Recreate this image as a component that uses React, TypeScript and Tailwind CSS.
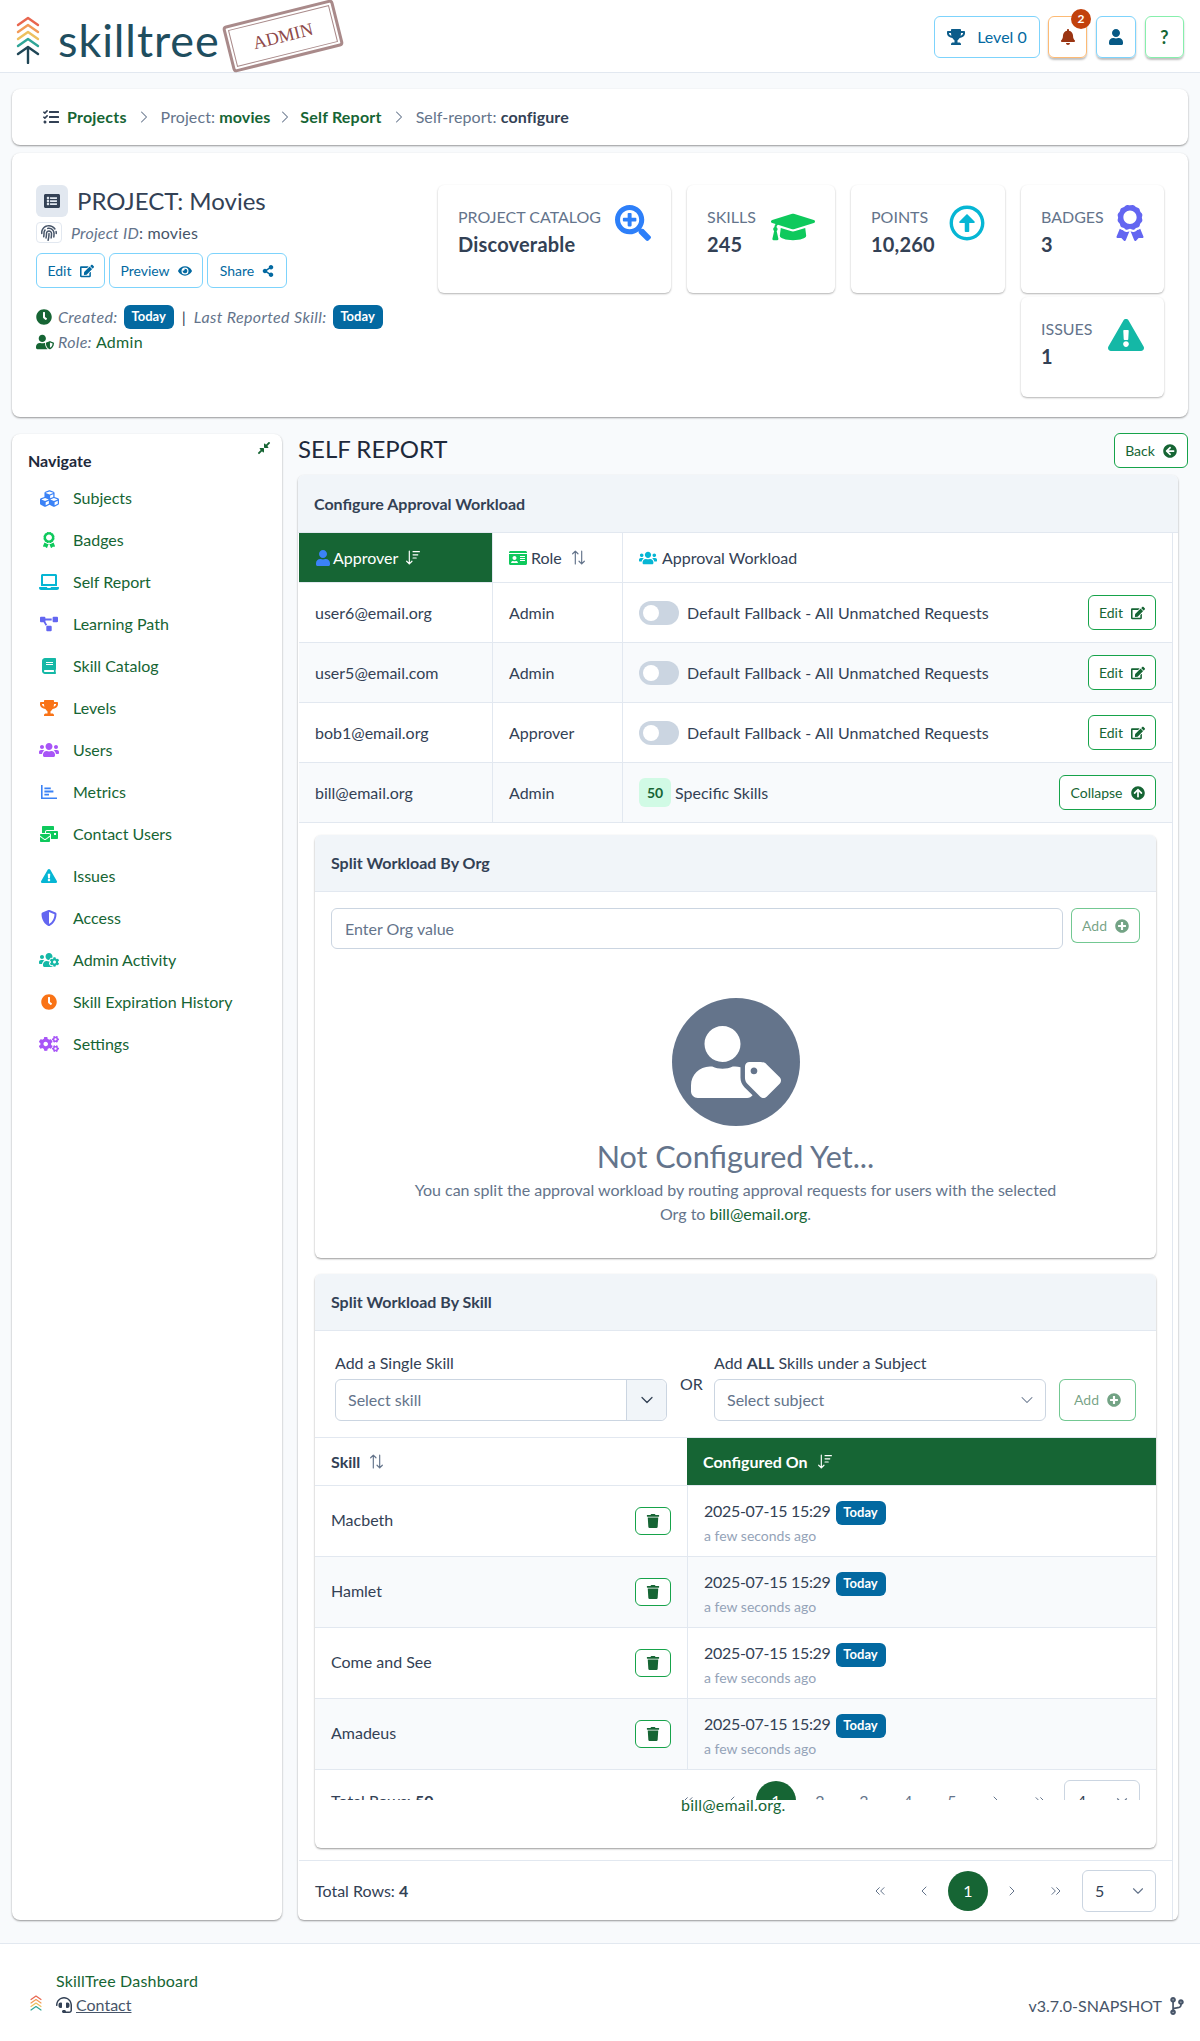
import React from 'react';
import { ChevronDown, ChevronLeft, ChevronRight, ChevronsLeft, ChevronsRight } from 'lucide-react';
import {
  FaTrophy, FaBell, FaUser, FaTasks, FaEdit, FaEye, FaShareAlt, FaClock, FaUserShield,
  FaFingerprint, FaListAlt, FaSearchPlus, FaGraduationCap, FaRegArrowAltCircleUp, FaAward,
  FaExclamationTriangle, FaCubes, FaLaptop, FaProjectDiagram, FaBook, FaUsers, FaMailBulk,
  FaShieldAlt, FaUsersCog, FaCogs, FaCompressAlt, FaIdCard, FaArrowCircleLeft, FaArrowCircleUp,
  FaPlusCircle, FaTrash, FaUserTag, FaCodeBranch, FaHeadset,
} from 'react-icons/fa';

const Chevrons = ({ className, stem = true }: { className: string; stem?: boolean }) => (
  <svg viewBox={stem ? '0 0 24 48' : '0 0 24 32'} className={className} fill="none" strokeWidth="2.4" strokeLinecap="round" strokeLinejoin="round">
    <path d="M2 9 12 2l10 7" stroke="#e8664f" />
    <path d="M2 16 12 9l10 7" stroke="#f29a57" />
    <path d="M2 23 12 16l10 7" stroke="#edc05f" />
    <path d="M2 30 12 23l10 7" stroke="#2ea597" />
    {stem && <path d="M2 38 12 31l10 7M12 31v16" stroke="#1f4656" />}
  </svg>
);

const SortAlt = ({ className = 'text-[#64748b]' }: { className?: string }) => (
  <svg viewBox="0 0 16 16" className={`h-[17px] w-[17px] ${className}`} fill="none" stroke="currentColor" strokeWidth="1.1" strokeLinecap="round" strokeLinejoin="round">
    <path d="M5 14V2M2.5 4.5 5 2l2.5 2.5M11 2v12M8.5 11.5 11 14l2.5-2.5" />
  </svg>
);

const SortDown = () => (
  <svg viewBox="0 0 16 16" className="h-[17px] w-[17px] text-white" fill="none" stroke="currentColor" strokeWidth="1.1" strokeLinecap="round" strokeLinejoin="round">
    <path d="M5 2v12M2.5 11.5 5 14l2.5-2.5M8.5 2.5h6M8.5 5.5h4.5M8.5 8.5h3" />
  </svg>
);

const MetricsIcon = () => (
  <svg viewBox="0 0 16 14" className="h-[14px] w-4" fill="#3b82f6">
    <path d="M0 0h1.6v12.4H16V14H0zM3.4 2.4h6.4v1.8H3.4zM3.4 5.6h9v1.8h-9zM3.4 8.8h4.6v1.8H3.4z" />
  </svg>
);

const Today = () => (
  <span className="inline-flex h-6 w-[50px] shrink-0 items-center justify-center rounded-md bg-[#0369a1] text-[13px] font-bold text-white">Today</span>
);

const Card = ({ label, value, icon, className }: { label: string; value: string; icon: React.ReactNode; className: string }) => (
  <div className={`flex justify-between rounded-md bg-white p-5 shadow-[0_1px_2px_rgba(0,0,0,0.3)] ${className}`}>
    <div>
      <div className="text-base leading-6 text-[#64748b]">{label}</div>
      <div className="mt-[3px] text-xl font-bold leading-6 tracking-[0.2px] text-[#334155]">{value}</div>
    </div>
    {icon}
  </div>
);

const nav: [string, React.ReactNode][] = [
  ['Subjects', <FaCubes className="text-[19px] text-[#3b82f6]" />],
  ['Badges', <FaAward className="text-base text-[#0ec95c]" />],
  ['Self Report', <FaLaptop className="text-xl text-[#06b6d4]" />],
  ['Learning Path', <FaProjectDiagram className="text-lg text-[#6366f1]" />],
  ['Skill Catalog', <FaBook className="text-base text-[#14b8a6]" />],
  ['Levels', <FaTrophy className="text-lg text-[#f97316]" />],
  ['Users', <FaUsers className="text-xl text-[#a855f7]" />],
  ['Metrics', <MetricsIcon />],
  ['Contact Users', <FaMailBulk className="text-lg text-[#0ec95c]" />],
  ['Issues', <FaExclamationTriangle className="text-base text-[#06b6d4]" />],
  ['Access', <FaShieldAlt className="text-base text-[#6366f1]" />],
  ['Admin Activity', <FaUsersCog className="text-xl text-[#14b8a6]" />],
  ['Skill Expiration History', <FaClock className="text-base text-[#f97316]" />],
  ['Settings', <FaCogs className="text-xl text-[#a855f7]" />],
];

const GreenBtn = ({ label, icon, className = '' }: { label: string; icon: React.ReactNode; className?: string }) => (
  <button className={`flex h-[35px] items-center justify-center gap-2 rounded-md border border-[#16a34a] bg-white text-sm text-[#166534] ${className}`}>
    {label}
    {icon}
  </button>
);

const approvers = [
  ['user6@email.org', 'Admin'],
  ['user5@email.com', 'Admin'],
  ['bob1@email.org', 'Approver'],
];

const Pager = ({ pages, size, selectClass }: { pages: string[]; size: string; selectClass: string }) => (
  <div className="flex items-center text-[#64748b]">
    <span className="flex w-11 justify-center"><ChevronsLeft size={16} strokeWidth={1.5} /></span>
    <span className="flex w-11 justify-center"><ChevronLeft size={16} strokeWidth={1.5} /></span>
    {pages.map((p, i) => (
      <span key={p} className={`flex h-10 w-11 items-center justify-center ${i === 0 ? 'text-white' : ''}`}>
        {i === 0 ? <span className="flex h-10 w-10 items-center justify-center rounded-full bg-[#166534]">{p}</span> : p}
      </span>
    ))}
    <span className="flex w-11 justify-center"><ChevronRight size={16} strokeWidth={1.5} /></span>
    <span className="flex w-11 justify-center"><ChevronsRight size={16} strokeWidth={1.5} /></span>
    <span className={`flex h-[42px] shrink-0 items-center justify-between rounded-md border border-[#cbd5e1] bg-white pl-3 pr-2 text-[#334155] ${selectClass}`}>
      {size}
      <ChevronDown size={18} strokeWidth={1.5} className="text-[#64748b]" />
    </span>
  </div>
);

const Crumb = () => <ChevronRight size={20} strokeWidth={1.25} className="text-[#64748b]" />;

const skills = ['Macbeth', 'Hamlet', 'Come and See', 'Amadeus'];

export default function App() {
  return (
    <div className="min-h-[2041px] bg-[#f8fafc] text-[#334155] [font-family:Lato,sans-serif]">
      <header className="flex h-[73px] items-start justify-between border-b border-[#e2e8f0] bg-white pl-4 pr-4">
        <div className="relative flex items-center pt-4">
          <Chevrons className="h-12 w-6" />
          <span className="ml-[18px] text-[45px] leading-[48px] tracking-[0.9px] text-[#1f4e5f]">skilltree</span>
          <div className="absolute left-[210px] top-[12px] flex h-[48px] w-[114px] -rotate-[14deg] items-center rounded-sm border-[3px] border-[#a98a8a] p-[2px] [font-family:'Liberation_Serif',serif]">
            <div className="flex h-full w-full items-center justify-center border border-[#a98a8a] text-lg text-[#8f4a4a]">ADMIN</div>
          </div>
        </div>
        <div className="flex items-center gap-[9px] pt-4">
          <button className="mr-[-1px] flex h-[42px] w-[106px] items-center justify-center gap-3 rounded-md border border-[#7dd3fc] text-[#0369a1]"><FaTrophy className="text-lg text-[#0c5c8a]" />Level 0</button>
          <button className="relative flex h-[42px] w-[39px] items-center justify-center rounded-md border border-[#fdba74] text-[#9a3412] shadow-[0_2px_2px_rgba(0,0,0,0.25)]">
            <FaBell />
            <span className="absolute -right-[5px] -top-2 flex h-5 w-5 items-center justify-center rounded-full bg-[#c2410c] text-xs font-bold text-white">2</span>
          </button>
          <button className="flex h-[42px] w-10 items-center justify-center rounded-md border border-[#7dd3fc] text-[#075985] shadow-[0_2px_2px_rgba(0,0,0,0.25)]"><FaUser /></button>
          <button className="flex h-[42px] w-[39px] items-center justify-center rounded-md border border-[#86efac] text-lg font-bold text-[#166534] shadow-[0_2px_2px_rgba(0,0,0,0.25)]">?</button>
        </div>
      </header>

      <div className="px-3 pt-4">
        <nav className="flex h-14 items-center rounded-lg bg-white pl-[31px] text-[#64748b] shadow-[0_1px_2px_rgba(0,0,0,0.4)]">
          <FaTasks className="mr-2 text-[#334155]" />
          <span className="font-bold tracking-[0.2px] text-[#166534]">Projects</span>
          <span className="mx-[7px]"><Crumb /></span>
          <span className="tracking-[0.1px]">Project: <b className="text-[#166534]">movies</b></span>
          <span className="mx-[5px]"><Crumb /></span>
          <span className="font-bold tracking-[0.2px] text-[#166534]">Self Report</span>
          <span className="mx-[7px]"><Crumb /></span>
          <span className="tracking-[0.1px]">Self-report: <b className="text-[#334155]">configure</b></span>
        </nav>

        <section className="mt-2 flex h-[264px] justify-between rounded-lg bg-white pl-6 pr-6 pt-8 shadow-[0_1px_2px_rgba(0,0,0,0.4)]">
          <div>
            <div className="flex h-8 items-center gap-[9px]">
              <span className="flex h-8 w-8 items-center justify-center rounded-md bg-[#e2e8f0] text-[#334155]"><FaListAlt /></span>
              <span className="text-2xl text-[#334155]">PROJECT: Movies</span>
            </div>
            <div className="mt-[5px] flex h-[21px] items-center gap-[9px] text-[#475569]">
              <span className="flex h-[21px] w-[26px] items-center justify-center rounded border border-[#e2e8f0]"><FaFingerprint className="text-base" /></span>
              <span className="text-base tracking-[0.2px]"><i className="text-[#64748b]">Project ID</i>: movies</span>
            </div>
            <div className="mt-[10px] flex gap-1 text-sm text-[#0369a1]">
              <button className="flex h-[35px] w-[69px] items-center justify-center gap-2 rounded-md border border-[#7dd3fc]">Edit <FaEdit /></button>
              <button className="flex h-[35px] w-[94px] items-center justify-center gap-2 rounded-md border border-[#7dd3fc]">Preview <FaEye /></button>
              <button className="flex h-[35px] w-[80px] items-center justify-center gap-2 rounded-md border border-[#7dd3fc]">Share <FaShareAlt className="text-xs" /></button>
            </div>
            <div className="mt-[17px] flex h-6 items-center gap-[6px] text-[#64748b]">
              <FaClock className="text-[#166534]" />
              <i className="tracking-[0.4px]">Created:</i>
              <Today />
              <span className="mx-[2px] text-[#334155]">|</span>
              <i className="tracking-[0.35px]">Last Reported Skill:</i>
              <Today />
            </div>
            <div className="mt-[1px] flex h-6 items-center gap-1 text-[#64748b]">
              <FaUserShield className="text-lg text-[#166534]" />
              <i className="tracking-[0.3px]">Role:</i>
              <span className="tracking-[0.3px] text-[#166534]">Admin</span>
            </div>
          </div>
          <div className="flex w-[726px] flex-wrap content-start justify-end gap-x-4 gap-y-1">
            <Card label="PROJECT CATALOG" value="Discoverable" className="h-[108px] w-[233px]" icon={<FaSearchPlus className="text-[36px] text-[#2d7ff9]" />} />
            <Card label="SKILLS" value="245" className="h-[108px] w-[148px]" icon={<FaGraduationCap className="text-[44px] text-[#0ec95c]" />} />
            <Card label="POINTS" value="10,260" className="h-[108px] w-[154px]" icon={<FaRegArrowAltCircleUp className="text-[36px] text-[#06b6d4]" />} />
            <Card label="BADGES" value="3" className="h-[108px] w-[143px]" icon={<FaAward className="-mr-1 text-[36px] text-[#6366f1]" />} />
            <Card label="ISSUES" value="1" className="h-[100px] w-[143px]" icon={<FaExclamationTriangle className="text-[36px] text-[#14b8a6]" />} />
          </div>
        </section>

        <div className="mt-[13px] flex gap-4">
          <aside className="relative mt-1 h-[1486px] w-[270px] rounded-lg bg-white pl-4 pt-[18px] shadow-[0_1px_2px_rgba(0,0,0,0.4)]">
            <FaCompressAlt className="absolute right-[11px] top-[7px] text-sm text-[#166534]" />
            <div className="text-base font-bold leading-[18px] text-[#1e293b]">Navigate</div>
            <ul className="mt-[7px]">
              {nav.map(([label, icon]) => (
                <li key={label} className="flex h-[42px] items-center text-[#166534]">
                  <span className="ml-[9px] flex w-6 justify-center">{icon}</span>
                  <span className="ml-3">{label}</span>
                </li>
              ))}
            </ul>
          </aside>

          <main className="w-[890px]">
            <div className="flex h-[45px] items-start justify-between">
              <h1 className="pt-[2px] text-2xl leading-[34px] text-[#1e293b]">SELF REPORT</h1>
              <GreenBtn label="Back" icon={<FaArrowCircleLeft />} className="mt-[3px] w-[74px]" />
            </div>

            <div className="h-[1445px] w-[880px] rounded-md bg-white shadow-[0_1px_2px_rgba(0,0,0,0.4)]">
              <div className="flex h-[58px] items-center rounded-t-md border-b border-[#e2e8f0] bg-[#f1f5f9] pl-4 font-bold text-[#334155]">Configure Approval Workload</div>
              <div className="ml-px w-[874px] border-r border-[#e2e8f0]">
                <div className="flex h-[50px] border-b border-[#e2e8f0]">
                  <div className="flex w-[193px] items-center gap-[2px] bg-[#166534] pl-4 text-white"><FaUser className="text-[#3b82f6]" />Approver <span className="ml-[4px]"><SortDown /></span></div>
                  <div className="flex w-[130px] items-center gap-[4px] border-l border-[#e2e8f0] pl-4"><FaIdCard className="text-lg text-[#0ec95c]" />Role <span className="ml-[4px]"><SortAlt /></span></div>
                  <div className="flex flex-1 items-center gap-[5px] border-l border-[#e2e8f0] pl-4"><FaUsers className="text-lg text-[#06b6d4]" />Approval Workload</div>
                </div>
                {approvers.map(([mail, role], i) => (
                  <div key={mail} className={`flex h-[60px] items-center border-b border-[#e2e8f0] ${i === 1 ? 'bg-[#f8fafc]' : ''}`}>
                    <div className="flex h-full w-[193px] items-center pl-4">{mail}</div>
                    <div className="flex h-full w-[130px] items-center border-l border-[#e2e8f0] pl-4">{role}</div>
                    <div className="flex h-full flex-1 items-center border-l border-[#e2e8f0] pl-4 pr-4">
                      <span className="flex h-6 w-10 items-center rounded-full bg-[#cbd5e1] pl-1"><span className="h-4 w-4 rounded-full bg-white" /></span>
                      <span className="ml-[8px] tracking-[0.1px]">Default Fallback - All Unmatched Requests</span>
                      <GreenBtn label="Edit" icon={<FaEdit />} className="ml-auto w-[68px]" />
                    </div>
                  </div>
                ))}
                <div className="flex h-[60px] items-center border-b border-[#e2e8f0] bg-[#f8fafc]">
                  <div className="flex h-full w-[193px] items-center pl-4">bill@email.org</div>
                  <div className="flex h-full w-[130px] items-center border-l border-[#e2e8f0] pl-4">Admin</div>
                  <div className="flex h-full flex-1 items-center border-l border-[#e2e8f0] pl-4 pr-4">
                    <span className="flex h-[29px] w-8 items-center justify-center rounded-md bg-[#d1fae5] text-sm font-bold text-[#166534]">50</span>
                    <span className="ml-1">Specific Skills</span>
                    <GreenBtn label="Collapse" icon={<FaArrowCircleUp />} className="ml-auto w-[97px]" />
                  </div>
                </div>

                <div className="px-4 pt-[12px]">
                  <div className="h-[423px] rounded-md shadow-[0_1px_2px_rgba(0,0,0,0.4)]">
                    <div className="flex h-[57px] items-center rounded-t-md border-b border-[#e2e8f0] bg-[#f1f5f9] pl-4 font-bold">Split Workload By Org</div>
                    <div className="flex gap-2 px-4 pt-4">
                      <div className="flex h-[41px] flex-1 items-center rounded-md border border-[#cbd5e1] pl-[13px] text-[#64748b]">Enter Org value</div>
                      <GreenBtn label="Add" icon={<FaPlusCircle />} className="w-[69px] border-[#16a34a]/60 text-[#166534]/60" />
                    </div>
                    <div className="flex flex-col items-center pt-[49px]">
                      <div className="flex h-32 w-32 items-center justify-center rounded-full bg-[#64748b] text-[90px] text-white"><FaUserTag /></div>
                      <div className="mt-[10px] text-[30.5px] leading-[40px] text-[#64748b]">Not Configured Yet...</div>
                      <p className="mt-[2px] w-[672px] text-center leading-6 text-[#64748b]">You can split the approval workload by routing approval requests for users with the selected Org to <span className="text-[#166534]">bill@email.org</span>.</p>
                    </div>
                  </div>

                  <div className="mt-4 h-[574px] rounded-md shadow-[0_1px_2px_rgba(0,0,0,0.4)]">
                    <div className="flex h-[57px] items-center rounded-t-md border-b border-[#e2e8f0] bg-[#f1f5f9] pl-4 font-bold">Split Workload By Skill</div>
                    <div className="flex items-end gap-3 border-b border-[#e2e8f0] px-5 pb-4 pt-5">
                      <div className="w-[332px]">
                        <div className="mb-1 leading-6">Add a Single Skill</div>
                        <div className="flex h-[42px] items-center rounded-md border border-[#cbd5e1]">
                          <span className="flex-1 pl-3 text-[#64748b]">Select skill</span>
                          <span className="flex h-full w-10 items-center justify-center rounded-r-md border-l border-[#cbd5e1] bg-[#f1f5f9]"><ChevronDown size={20} strokeWidth={1.5} /></span>
                        </div>
                      </div>
                      <span className="ml-px w-[22px] pb-[25px] leading-6">OR</span>
                      <div className="w-[332px]">
                        <div className="mb-1 leading-6">Add <b>ALL</b> Skills under a Subject</div>
                        <div className="flex h-[42px] items-center justify-between rounded-md border border-[#cbd5e1] pl-3 pr-2 text-[#64748b]">
                          <span>Select subject</span>
                          <ChevronDown size={20} strokeWidth={1.25} />
                        </div>
                      </div>
                      <GreenBtn label="Add" icon={<FaPlusCircle />} className="ml-px !h-[42px] w-[77px] border-[#16a34a]/60 text-base text-[#166534]/60" />
                    </div>

                    <div className="flex h-[48px] border-b border-[#e2e8f0]">
                      <div className="flex w-[372px] items-center gap-2 pl-4 font-bold">Skill <SortAlt /></div>
                      <div className="flex flex-1 items-center gap-2 bg-[#166534] pl-4 font-bold text-white">Configured On <SortDown /></div>
                    </div>
                    {skills.map((s, i) => (
                      <div key={s} className={`flex h-[71px] border-b border-[#e2e8f0] ${i % 2 ? 'bg-[#f8fafc]' : ''}`}>
                        <div className="flex w-[372px] items-center justify-between pl-4 pr-4">
                          <span className="mb-[2px]">{s}</span>
                          <button className="flex h-7 w-9 items-center justify-center rounded-md border border-[#16a34a] bg-white text-sm text-[#166534]"><FaTrash /></button>
                        </div>
                        <div className="flex-1 border-l border-[#e2e8f0] pl-4 pt-[15px]">
                          <div className="flex h-6 items-center gap-[5px]"><span className="-mt-[4px] tracking-[-0.3px]">2025-07-15 15:29</span> <Today /></div>
                          <div className="mt-px text-sm text-[#94a3b8]">a few seconds ago</div>
                        </div>
                      </div>
                    ))}
                    <div className="h-[30px] overflow-hidden pl-4 pr-4 pt-[10px]">
                      <div className="flex h-[42px] items-center justify-between">
                        <span>Total Rows: <b>50</b></span>
                        <Pager pages={['1', '2', '3', '4', '5']} size="4" selectClass="ml-[2px] w-[76px]" />
                      </div>
                    </div>
                    <div className="relative -mt-[7px] pl-[366px] leading-6 tracking-[0.2px] text-[#166534]">bill@email.org.</div>
                  </div>
                </div>

                <div className="mt-[12px] flex h-[60px] items-center justify-between border-t border-[#e2e8f0] pl-4 pr-4">
                  <span>Total Rows: <b>4</b></span>
                  <Pager pages={['1']} size="5" selectClass="ml-1 w-[74px]" />
                </div>
              </div>
            </div>
          </main>
        </div>
      </div>

      <footer className="mt-[23px] flex h-[98px] items-start justify-between border-t border-[#e2e8f0] bg-white pl-[30px] pr-4 pt-[25px]">
        <div className="flex items-end gap-[14px]">
          <Chevrons stem={false} className="mb-[3px] h-[22px] w-3" />
          <div>
            <div className="leading-6 tracking-[0.2px] text-[#166534]">SkillTree Dashboard</div>
            <div className="flex items-center gap-1 leading-6"><FaHeadset className="text-[#334155]" /><span className="text-[#475569] underline">Contact</span></div>
          </div>
        </div>
        <div className="flex items-center gap-[6px] pt-[25px] text-[#475569]">v3.7.0-SNAPSHOT <FaCodeBranch className="-mr-[2px] text-lg" /></div>
      </footer>
    </div>
  );
}
